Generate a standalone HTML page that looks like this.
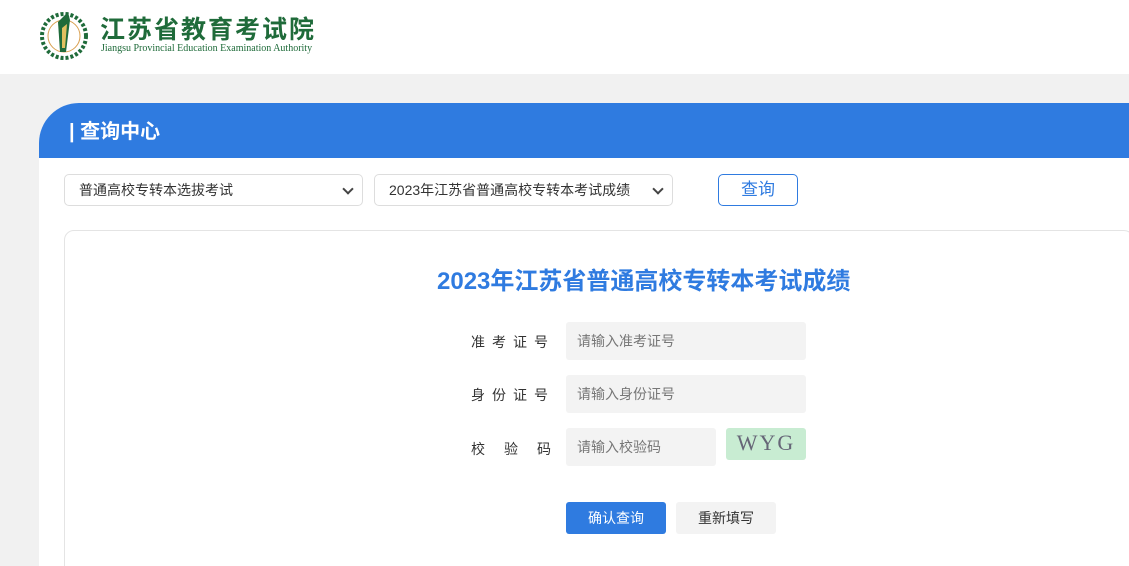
<!DOCTYPE html>
<html><head><meta charset="utf-8"><style>
*{margin:0;padding:0;box-sizing:border-box}
html,body{width:1129px;height:566px;overflow:hidden}
body{background:#f1f1f1;font-family:"Liberation Sans","Noto Sans CJK SC",sans-serif;position:relative}
.hdr{position:absolute;left:0;top:0;width:1129px;height:74px;background:#fff;overflow:hidden}
.card{position:absolute;left:39px;top:103px;width:1090px;height:463px;background:#fff;border-top-left-radius:40px;overflow:hidden}
.bar{height:55px;background:#2f7be0;color:#fff;font-size:20px;font-weight:bold;padding-left:30px;line-height:58px}
.sel{position:absolute;top:71px;height:32px;border:1px solid #ddd;border-radius:5px;font-size:14px;color:#333;line-height:30px;padding-left:14px}
.sel:after{content:"";position:absolute;right:10px;top:10px;width:6px;height:6px;border-right:2px solid #444;border-bottom:2px solid #444;transform:rotate(45deg)}
.btn{position:absolute;left:679px;top:71px;width:80px;height:32px;border:1px solid #2f7be0;border-radius:5px;color:#2f7be0;font-size:17px;text-align:center;line-height:30px}
.box{position:absolute;left:25px;top:127px;width:1070px;height:400px;border:1px solid #e4e4e4;border-radius:10px}
h1{position:absolute;left:398px;top:158px;white-space:nowrap;font-size:24px;color:#2f7be0;font-weight:bold}
.lbl{position:absolute;left:432px;font-size:14px;color:#333;letter-spacing:7px}
.inp{position:absolute;left:527px;width:240px;height:38px;background:#f3f3f3;border-radius:3px;font-size:14px;color:#777;line-height:38px;padding-left:11px}
.b{position:absolute;top:399px;height:32px;width:100px;border-radius:3px;font-size:14px;text-align:center;line-height:32px}
</style></head><body>
<div class="hdr">
<svg style="position:absolute;left:38px;top:8px" width="52" height="54" viewBox="0 0 52 54">
<circle cx="26" cy="28" r="22" fill="none" stroke="#1f6b3a" stroke-width="4" stroke-dasharray="3 2"/>
<circle cx="26" cy="28" r="16" fill="none" stroke="#d9a050" stroke-width="1"/>
<path d="M20 14 L30 4 L32 12 L28 44 L22 44 Z" fill="#1f6b3a"/>
<path d="M24 20 L29 16 L27 40 L24 40 Z" fill="#e0c060"/>
</svg>
<div style="position:absolute;left:100px;top:13px;font-size:25px;font-weight:bold;color:#1f6b3a;letter-spacing:2px;font-family:'Noto Sans CJK SC',sans-serif;line-height:30px">江苏省教育考试院</div>
<div style="position:absolute;left:101px;top:43px;font-size:10px;color:#1f6b3a;font-family:'Liberation Serif',serif;white-space:nowrap">Jiangsu Provincial Education Examination Authority</div>
</div>
<div class="card">
<div class="bar">| 查询中心</div>
<div class="sel" style="left:25px;width:299px">普通高校专转本选拔考试</div>
<div class="sel" style="left:335px;width:299px">2023年江苏省普通高校专转本考试成绩</div>
<div class="btn">查询</div>
<div class="box"></div>
<h1>2023年江苏省普通高校专转本考试成绩</h1>
<div class="lbl" style="top:229px">准考证号</div>
<div class="inp" style="top:219px">请输入准考证号</div>
<div class="lbl" style="top:282px">身份证号</div>
<div class="inp" style="top:272px">请输入身份证号</div>
<div class="lbl" style="top:336px;letter-spacing:19px">校验码</div>
<div class="inp" style="top:325px;width:150px">请输入校验码</div>
<div style="position:absolute;left:687px;top:325px;width:80px;height:32px;background:#c8ecd2;border-radius:3px;color:#667;font-size:22px;font-family:'Liberation Serif',serif;line-height:30px;text-align:center;letter-spacing:2px">WYG</div>
<div class="b" style="left:527px;background:#2f7be0;color:#fff">确认查询</div>
<div class="b" style="left:637px;background:#f3f3f3;color:#333">重新填写</div>
</div>
</body></html>
